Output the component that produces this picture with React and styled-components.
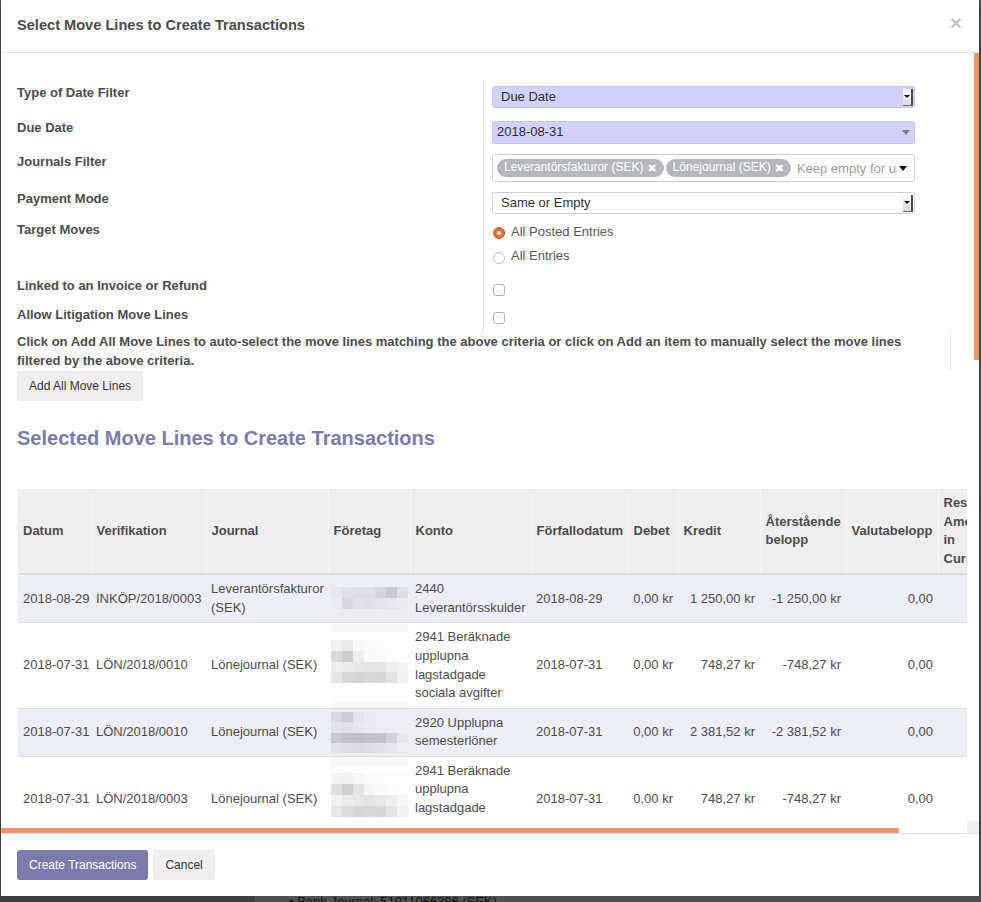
import React from 'react';
import styled, { createGlobalStyle } from 'styled-components';
import { Trash2 } from 'lucide-react';

const GlobalStyle = createGlobalStyle`
  html, body { margin: 0; padding: 0; }
  body {
    background: #575757;
    font-family: "Liberation Sans", Arial, sans-serif;
    font-size: 13px;
    line-height: 1.42857;
    color: #4c4c4c;
    overflow: hidden;
  }
`;

const Backdrop = styled.div`
  width: 981px;
  height: 902px;
  display: flex;
  flex-direction: column;
`;

const Modal = styled.div`
  flex: none;
  margin-left: 1px;
  width: 978px;
  height: 896px;
  background: #fff;
  display: flex;
  flex-direction: column;
  box-shadow: 0 5px 15px rgba(0, 0, 0, 0.5);
`;

const Header = styled.div`
  display: flex;
  align-items: flex-start;
  justify-content: space-between;
  padding: 15px 17px 16px 16px;
  border-bottom: 1px solid #e5e5e5;
`;

const Title = styled.h4`
  margin: 0;
  font-size: 14.6px;
  line-height: 21px;
  font-weight: bold;
  color: #4c4c4c;
`;

const Close = styled.button`
  border: 0;
  background: none;
  padding: 0;
  margin-top: -3px;
  font: bold 21px/1 "Liberation Sans", Arial, sans-serif;
  color: #c6c6c6;
  cursor: pointer;
`;

/* body with its own scroll bars: viewport, vertical track, horizontal track, corner */
const Body = styled.div`
  flex: 1;
  min-height: 0;
  display: grid;
  grid-template-columns: minmax(0, 1fr) 12px;
  grid-template-rows: minmax(0, 1fr) 12px;
`;

const Viewport = styled.div`
  overflow: hidden;
`;

const VTrack = styled.div`
  background: #fff;
  display: flex;
  justify-content: flex-end;
`;

const VThumb = styled.div`
  width: 5px;
  height: ${p => p.$size}px;
  background: #f5926a;
`;

const HTrack = styled.div`
  background: #fff;
  display: flex;
  align-items: flex-end;
`;

const HThumb = styled.div`
  height: 5px;
  width: ${p => p.$size}px;
  background: #f5926a;
`;

const Corner = styled.div`
  background: #efefef;
`;

const Sheet = styled.div`
  padding: 28px 16px 0;
`;

/* ---------- form group ---------- */

const Row = styled.div`
  display: grid;
  grid-template-columns: 466px 1fr;
  height: ${p => p.$h}px;
`;

const Label = styled.div`
  padding-top: ${p => p.$pt}px;
  font-weight: bold;
  color: #4c4c4c;
`;

const FieldCell = styled.div`
  border-left: 1px solid #e2e2e2;
  padding-left: 8px;
  padding-top: ${p => p.$pt}px;
`;

const SelectBox = styled.div`
  box-sizing: border-box;
  width: 423px;
  height: ${p => p.$h}px;
  display: flex;
  align-items: center;
  padding-left: ${p => p.$pl}px;
  background: ${p => (p.$required ? '#d2d2ff' : '#fff')};
  border: 1px solid ${p => (p.$required ? '#c4c4e4' : '#cfcfcf')};
  border-radius: 3px;
  color: #2f2f2f;
`;

const SelectArrow = styled.span`
  margin-left: auto;
  margin-right: 1px;
  box-sizing: border-box;
  width: 10px;
  height: 17px;
  background: linear-gradient(#fbfbfb, #d9d9d9);
  border-right: 2px solid #4a4a4a;
  border-bottom: 1px solid #6a6a6a;
  display: flex;
  align-items: center;
  justify-content: center;

  &::after {
    content: '';
    border-left: 3px solid transparent;
    border-right: 3px solid transparent;
    border-top: 3px solid #111;
  }
`;

const Caret = styled.span`
  flex: none;
  margin-left: auto;
  margin-right: ${p => p.$mr}px;
  width: 0;
  height: 0;
  border-left: 4px solid transparent;
  border-right: 4px solid transparent;
  border-top: 5px solid ${p => p.$color};
`;

const TagsBox = styled.div`
  box-sizing: border-box;
  width: 423px;
  height: 28px;
  display: flex;
  align-items: center;
  gap: 2px;
  padding: 0 0 0 4px;
  border: 1px solid #cfcfcf;
  border-radius: 3px;
  background: #fff;
`;

const Tag = styled.span`
  flex: none;
  display: inline-flex;
  align-items: center;
  gap: 4px;
  height: 18px;
  padding: 0 7px;
  border-radius: 9px;
  background: #b5b7ba;
  color: #fff;
  font-size: 12px;
  white-space: nowrap;
`;

const TagRemove = styled.span`
  font-family: "DejaVu Sans", sans-serif;
  font-size: 11px;
  line-height: 1;
  font-weight: bold;
  color: #fff;
`;

const TagInput = styled.input`
  flex: 1;
  min-width: 0;
  margin-left: 4px;
  border: 0;
  outline: none;
  padding: 0;
  font: 13px "Liberation Sans", Arial, sans-serif;
  color: #333;
  background: transparent;

  &::placeholder { color: #9a9a9a; }
`;

const RadioOption = styled.label`
  display: flex;
  align-items: center;
  gap: 6px;
  height: 24.5px;
  padding-left: 1px;
  color: #555;
`;

const Radio = styled.input.attrs({ type: 'radio' })`
  appearance: none;
  margin: 2px 0 0;
  width: 12px;
  height: 12px;
  box-sizing: border-box;
  border-radius: 50%;
  border: 1px solid #bdbdbd;
  background: #fff;
  display: grid;
  place-items: center;

  &:checked {
    border-color: #c9602c;
    background: #e0703a;
  }
  &:checked::after {
    content: '';
    width: 4px;
    height: 4px;
    border-radius: 50%;
    background: #fff;
  }
`;

const Checkbox = styled.input.attrs({ type: 'checkbox' })`
  appearance: none;
  display: block;
  margin: 0 0 0 1px;
  width: 12px;
  height: 12px;
  box-sizing: border-box;
  border: 1px solid #b3b3b3;
  border-radius: 3px;
  background: #fff;
`;

const Notice = styled.p`
  margin: 0;
  padding-right: 30px;
  border-right: 1px solid #e2e2e2;
  font-weight: bold;
  line-height: 18.5px;
  color: #4c4c4c;
`;

const Button = styled.button`
  border: 1px solid transparent;
  border-radius: 3px;
  padding: 5px 11px;
  font: 12px/18px "Liberation Sans", Arial, sans-serif;
  background: ${p => (p.$primary ? '#7c7bad' : '#f0eeee')};
  color: ${p => (p.$primary ? '#fff' : '#333')};
  cursor: pointer;
`;

const AddButton = styled(Button)`
  display: block;
  margin-top: 1px;
`;

const Heading = styled.h3`
  margin: 26px 0 40px;
  font-size: 20px;
  line-height: 22px;
  font-weight: bold;
  color: #7c7bad;
`;

/* ---------- list ---------- */

const Table = styled.table`
  margin-left: 1px;
  border-collapse: collapse;
  table-layout: fixed;
  width: ${p => p.$w}px;
`;

const Col = styled.col`
  width: ${p => p.$w}px;
`;

const Th = styled.th`
  padding: 5px;
  background: #eeeeee;
  border-bottom: 2px solid #dddddd;
  & + & { border-left: 1px solid #f8f8f8; }
  text-align: left;
  vertical-align: middle;
  font-weight: bold;
  color: #4c4c4c;
  overflow: hidden;
`;

const Tr = styled.tr`
  &:nth-child(odd) { background: #ededf5; }
`;

const Td = styled.td`
  padding: ${p => (p.$flush ? '5px 2px 5px 3px' : '5px')};
  border-top: 1px solid #dddddd;
  vertical-align: middle;
  text-align: ${p => (p.$num ? 'right' : 'left')};
  white-space: ${p => (p.$nowrap ? 'nowrap' : 'normal')};
  color: #4c4c4c;
  overflow: hidden;
`;

const MosaicSvg = styled.svg`
  display: block;
  margin: -5px 0;
`;

const Footer = styled.div`
  display: flex;
  gap: 5px;
  padding: 16px 16px;
  border-top: 1px solid #e5e5e5;
`;

const Behind = styled.div`
  flex: 1;
  display: flex;
  overflow: hidden;
`;

const BehindSide = styled.div`
  width: 255px;
  background: #3f3f3f;
`;

const BehindMain = styled.div`
  flex: 1;
  background: #525252;
  padding-left: 34px;
  margin-top: -2px;
  color: #111;
  font-size: 13px;
  line-height: 16px;
`;

/* ---------- data ---------- */

const band = (y, h, colors) => ({ y, h, colors: colors.length === 1 ? Array(7).fill(colors[0]) : colors });

const MOSAICS = [
  [
    band(12, 11, ['#e6e6ec', '#dfdfe5', '#dadae0', '#dcdce2', '#d6d6dc', '#c9c9cf', '#dedee4']),
    band(23, 11, ['#ebebf1', '#d8d8de', '#e2e2e8', '#e0e0e6', '#e4e4ea', '#e6e6ec', '#e9e9ef']),
  ],
  [
    band(0, 8, ['#f7f7f7']),
    band(16, 11, ['#f1f1f1', '#ebebeb', '#f7f7f7', '#fbfbfb', '#fcfcfc', '#fdfdfd', '#fdfdfd']),
    band(27, 11, ['#dadada', '#cdcdcd', '#eeeeee', '#fafafa', '#fbfbfb', '#fdfdfd', '#fefefe']),
    band(38, 10, ['#efefef', '#ebebeb', '#e7e7e7', '#e3e3e3', '#e6e6e6', '#eeeeee', '#f5f5f5']),
    band(48, 11, ['#e4e4e4', '#d9d9d9', '#d4d4d4', '#d8d8d8', '#d6d6d6', '#e3e3e3', '#f0f0f0']),
    band(77, 7, ['#f8f8f8']),
  ],
  [
    band(3, 10, ['#d8d8de', '#cbcbd1', '#e3e3e9', '#e9e9ef', '#ebebf1', '#ececf2', '#ececf2']),
    band(13, 11, ['#e3e3e9', '#e0e0e6', '#e7e7ed', '#eaeaf0', '#ebebf1', '#ececf2', '#ececf2']),
    band(24, 10, ['#c8c8ce', '#c2c2c8', '#bfbfc5', '#c1c1c7', '#c3c3c9', '#d3d3d9', '#e5e5eb']),
    band(34, 10, ['#e1e1e7', '#dcdce2', '#dadae0', '#dcdce2', '#e0e0e6', '#e5e5eb', '#ebebf1']),
  ],
  [
    band(0, 10, ['#f7f7f7']),
    band(16, 11, ['#f4f4f4', '#f1f1f1', '#f7f7f7', '#fbfbfb', '#fcfcfc', '#fdfdfd', '#fdfdfd']),
    band(27, 11, ['#dedede', '#d0d0d0', '#e4e4e4', '#f6f6f6', '#fafafa', '#fcfcfc', '#fdfdfd']),
    band(38, 11, ['#f1f1f1', '#eaeaea', '#e6e6e6', '#e3e3e3', '#e7e7e7', '#eeeeee', '#f6f6f6']),
    band(49, 11, ['#e6e6e6', '#dbdbdb', '#d6d6d6', '#d9d9d9', '#d7d7d7', '#e4e4e4', '#f1f1f1']),
  ],
];

const COLUMNS = [
  { key: 'date', title: 'Datum', w: 73, nowrap: true },
  { key: 'move', title: 'Verifikation', w: 115, nowrap: true },
  { key: 'journal', title: 'Journal', w: 122 },
  { key: 'partner', title: 'Företag', w: 82 },
  { key: 'account', title: 'Konto', w: 121 },
  { key: 'due', title: 'Förfallodatum', w: 97, nowrap: true },
  { key: 'debit', title: 'Debet', w: 50, num: true },
  { key: 'credit', title: 'Kredit', w: 82, num: true },
  { key: 'residual', title: 'Återstående belopp', w: 86, num: true },
  { key: 'amountCurrency', title: 'Valutabelopp', w: 92, num: true },
  { key: 'residualCurrency', title: 'Residual Amount in Currency', w: 70, num: true },
  { key: 'remove', title: '', w: 15 },
];

const LINES = [
  {
    date: '2018-08-29', move: 'INKÖP/2018/0003', journal: 'Leverantörsfakturor (SEK)',
    account: '2440 Leverantörsskulder', due: '2018-08-29', debit: '0,00 kr',
    credit: '1 250,00 kr', residual: '-1 250,00 kr', amountCurrency: '0,00', residualCurrency: '0,00',
    height: 47,
  },
  {
    date: '2018-07-31', move: 'LÖN/2018/0010', journal: 'Lönejournal (SEK)',
    account: '2941 Beräknade upplupna lagstadgade sociala avgifter', due: '2018-07-31', debit: '0,00 kr',
    credit: '748,27 kr', residual: '-748,27 kr', amountCurrency: '0,00', residualCurrency: '0,00',
    height: 84,
  },
  {
    date: '2018-07-31', move: 'LÖN/2018/0010', journal: 'Lönejournal (SEK)',
    account: '2920 Upplupna semesterlöner', due: '2018-07-31', debit: '0,00 kr',
    credit: '2 381,52 kr', residual: '-2 381,52 kr', amountCurrency: '0,00', residualCurrency: '0,00',
    height: 47,
  },
  {
    date: '2018-07-31', move: 'LÖN/2018/0003', journal: 'Lönejournal (SEK)',
    account: '2941 Beräknade upplupna lagstadgade sociala avgifter', due: '2018-07-31', debit: '0,00 kr',
    credit: '748,27 kr', residual: '-748,27 kr', amountCurrency: '0,00', residualCurrency: '0,00',
    height: 84,
  },
];

function Mosaic({ bands, height }) {
  return (
    <MosaicSvg width="77" height={height} viewBox={`0 0 77 ${height}`} aria-hidden="true">
      {bands.map((b, i) =>
        b.colors.map((c, j) => (
          <rect key={`${i}-${j}`} x={j * 11} y={b.y} width="11" height={b.h} fill={c} />
        ))
      )}
    </MosaicSvg>
  );
}

function Cell({ col, line, index }) {
  if (col.key === 'partner') {
    return (
      <Td $flush>
        <Mosaic bands={MOSAICS[index]} height={line.height} />
      </Td>
    );
  }
  if (col.key === 'remove') {
    return (
      <Td>
        <Trash2 size={12} color="#999" />
      </Td>
    );
  }
  const text = col.num ? line[col.key].replace(/ /g, '\u00a0') : line[col.key];
  return (
    <Td $num={col.num} $nowrap={col.nowrap || col.num}>
      {text}
    </Td>
  );
}

function MoveLinesTable() {
  const width = COLUMNS.reduce((sum, c) => sum + c.w, 0);
  return (
    <Table $w={width}>
      <colgroup>
        {COLUMNS.map(c => <Col key={c.key} $w={c.w} />)}
      </colgroup>
      <thead>
        <tr>
          {COLUMNS.map(c => <Th key={c.key}>{c.title}</Th>)}
        </tr>
      </thead>
      <tbody>
        {LINES.map((line, i) => (
          <Tr key={i}>
            {COLUMNS.map(c => <Cell key={c.key} col={c} line={line} index={i} />)}
          </Tr>
        ))}
      </tbody>
    </Table>
  );
}

export default function App() {
  return (
    <Backdrop>
      <GlobalStyle />
      <Modal>
        <Header>
          <Title>Select Move Lines to Create Transactions</Title>
          <Close aria-label="Close">×</Close>
        </Header>

        <Body>
          <Viewport>
            <Sheet>
              <Row $h={35}>
                <Label $pt={3}>Type of Date Filter</Label>
                <FieldCell $pt={5}>
                  <SelectBox $required $h={22} $pl={8}>
                    Due Date
                    <SelectArrow />
                  </SelectBox>
                </FieldCell>
              </Row>
              <Row $h={34}>
                <Label $pt={3}>Due Date</Label>
                <FieldCell $pt={5}>
                  <SelectBox $required $h={23} $pl={4}>
                    2018-08-31
                    <Caret $color="#7a7a7a" $mr={4} />
                  </SelectBox>
                </FieldCell>
              </Row>
              <Row $h={38}>
                <Label $pt={3}>Journals Filter</Label>
                <FieldCell $pt={4}>
                  <TagsBox>
                    <Tag>Leverantörsfakturor (SEK) <TagRemove>✖</TagRemove></Tag>
                    <Tag>Lönejournal (SEK) <TagRemove>✖</TagRemove></Tag>
                    <TagInput placeholder="Keep empty for using all journals" readOnly />
                    <Caret $color="#111" $mr={7} />
                  </TagsBox>
                </FieldCell>
              </Row>
              <Row $h={30}>
                <Label $pt={2}>Payment Mode</Label>
                <FieldCell $pt={4}>
                  <SelectBox $h={22} $pl={8}>
                    Same or Empty
                    <SelectArrow />
                  </SelectBox>
                </FieldCell>
              </Row>
              <Row $h={55}>
                <Label $pt={3}>Target Moves</Label>
                <FieldCell $pt={2}>
                  <RadioOption>
                    <Radio name="target" defaultChecked /> All Posted Entries
                  </RadioOption>
                  <RadioOption>
                    <Radio name="target" /> All Entries
                  </RadioOption>
                </FieldCell>
              </Row>
              <Row $h={30}>
                <Label $pt={4}>Linked to an Invoice or Refund</Label>
                <FieldCell $pt={11}>
                  <Checkbox />
                </FieldCell>
              </Row>
              <Row $h={30}>
                <Label $pt={3}>Allow Litigation Move Lines</Label>
                <FieldCell $pt={9}>
                  <Checkbox />
                </FieldCell>
              </Row>

              <Notice>
                Click on Add All Move Lines to auto-select the move lines matching the above criteria or
                click on Add an item to manually select the move lines filtered by the above criteria.
              </Notice>
              <AddButton>Add All Move Lines</AddButton>

              <Heading>Selected Move Lines to Create Transactions</Heading>
              <MoveLinesTable />
            </Sheet>
          </Viewport>
          <VTrack>
            <VThumb $size={307} />
          </VTrack>
          <HTrack>
            <HThumb $size={898} />
          </HTrack>
          <Corner />
        </Body>

        <Footer>
          <Button $primary>Create Transactions</Button>
          <Button>Cancel</Button>
        </Footer>
      </Modal>
      <Behind>
        <BehindSide />
        <BehindMain>• Bank Journal: 51011066386 (SEK)</BehindMain>
      </Behind>
    </Backdrop>
  );
}
